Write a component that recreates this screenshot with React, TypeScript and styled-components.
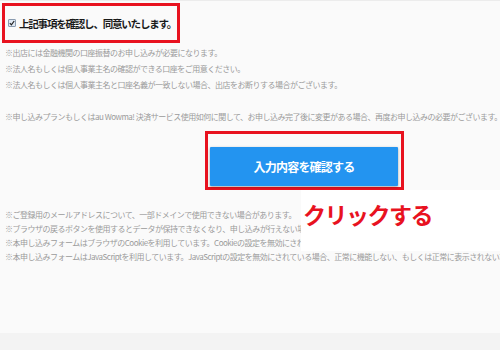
import React from "react"
import styled, { createGlobalStyle } from "styled-components"

const GlobalStyle = createGlobalStyle`
    html, body {
        margin: 0;
        padding: 0;
        background: #f3f3f3;
        font-family: "Noto Sans CJK JP", "Liberation Sans", sans-serif;
    }
`

const topNotes = [
    "※出店には金融機関の口座振替のお申し込みが必要になります。",
    "※法人名もしくは個人事業主名の確認ができる口座をご用意ください。",
    "※法人名もしくは個人事業主名と口座名義が一致しない場合、出店をお断りする場合がございます。",
    "",
    "※申し込みプランもしくはau Wowma! 決済サービス使用如何に関して、お申し込み完了後に変更がある場合、再度お申し込みの必要がございます。"
]

const bottomNotes = [
    "※ご登録用のメールアドレスについて、一部ドメインで使用できない場合があります。",
    "※ブラウザの戻るボタンを使用するとデータが保持できなくなり、申し込みが行えない場合があります。",
    "※本申し込みフォームはブラウザのCookieを利用しています。Cookieの設定を無効にされている場合、正常に機能しない場合があります。",
    "※本申し込みフォームはJavaScriptを利用しています。JavaScriptの設定を無効にされている場合、正常に機能しない、もしくは正常に表示されない場合があります。"
]

const Page = styled.div`
    position: relative;
    width: 500px;
    height: 350px;
    overflow: hidden;
    display: flex;
    flex-direction: column;
`

const Content = styled.div`
    height: 333px;
    background: #fafafa;
    border-top: 1px solid #ececec;
    box-sizing: border-box;
    display: flex;
    flex-direction: column;
`

const Footer = styled.div`
    flex: 1;
    background: #f3f3f3;
`

const AgreeBox = styled.div`
    margin: 2px 0 0 2px;
    width: 178px;
    height: 40px;
    box-sizing: border-box;
    border: 3px solid #e8121f;
    display: flex;
    align-items: center;
    gap: 3px;
    padding-left: 3px;
`

const CheckMark = styled.span`
    width: 8px;
    height: 8px;
    box-sizing: border-box;
    border: 1px solid #8a9bb0;
    border-radius: 1px;
    background: #dfe8f3;
    display: flex;
    align-items: center;
    justify-content: center;
`

const AgreeText = styled.span`
    font-size: 10.5px;
    font-weight: 700;
    letter-spacing: -1.2px;
    color: #1a1a1a;
    white-space: nowrap;
`

const Notes = styled.div<{ $gap: number }>`
    margin-top: ${p => p.$gap}px;
    padding-left: 5px;
    font-size: 8px;
    letter-spacing: -0.5px;
    color: #9a9a9a;
    white-space: nowrap;
    overflow: hidden;
`

const NoteLine = styled.div<{ $height: number }>`
    height: ${p => p.$height}px;
    line-height: ${p => p.$height}px;
`

const ButtonFrame = styled.div`
    margin: 6px 0 0 205px;
    width: 199px;
    height: 59px;
    box-sizing: border-box;
    border: 3px solid #e8121f;
    padding: 13px 3px 1px 2px;
    display: flex;
`

const ConfirmButton = styled.button`
    flex: 1;
    border: none;
    border-radius: 1px;
    background: #2394f0;
    color: #ffffff;
    font-family: "Noto Sans CJK JP", sans-serif;
    font-size: 12px;
    font-weight: 700;
    letter-spacing: -0.8px;
    box-shadow: 0 1px 3px rgba(0, 0, 0, 0.35);
    cursor: pointer;
`

const Callout = styled.div`
    position: absolute;
    left: 301px;
    top: 190px;
    width: 199px;
    height: 61px;
    background: #ffffff;
    padding: 9px 0 0 2px;
    box-sizing: border-box;
    font-size: 23px;
    font-weight: 700;
    letter-spacing: -1.5px;
    line-height: 30px;
    color: #e8121f;
`

export default function App() {
    return (
        <Page>
            <GlobalStyle />
            <Content>
                <AgreeBox>
                    <CheckMark>
                        <svg width="6" height="6" viewBox="0 0 6 6">
                            <path d="M0.8 3.2 L2.4 4.8 L5.2 1" fill="none" stroke="#222" strokeWidth="1.2" />
                        </svg>
                    </CheckMark>
                    <AgreeText>上記事項を確認し、同意いたします。</AgreeText>
                </AgreeBox>
                <Notes $gap={2}>
                    {topNotes.map((n, i) => (
                        <NoteLine key={i} $height={16}>{n}</NoteLine>
                    ))}
                </Notes>
                <ButtonFrame>
                    <ConfirmButton>入力内容を確認する</ConfirmButton>
                </ButtonFrame>
                <Notes $gap={18}>
                    {bottomNotes.map((n, i) => (
                        <NoteLine key={i} $height={14}>{n}</NoteLine>
                    ))}
                </Notes>
            </Content>
            <Footer />
            <Callout>クリックする</Callout>
        </Page>
    )
}
